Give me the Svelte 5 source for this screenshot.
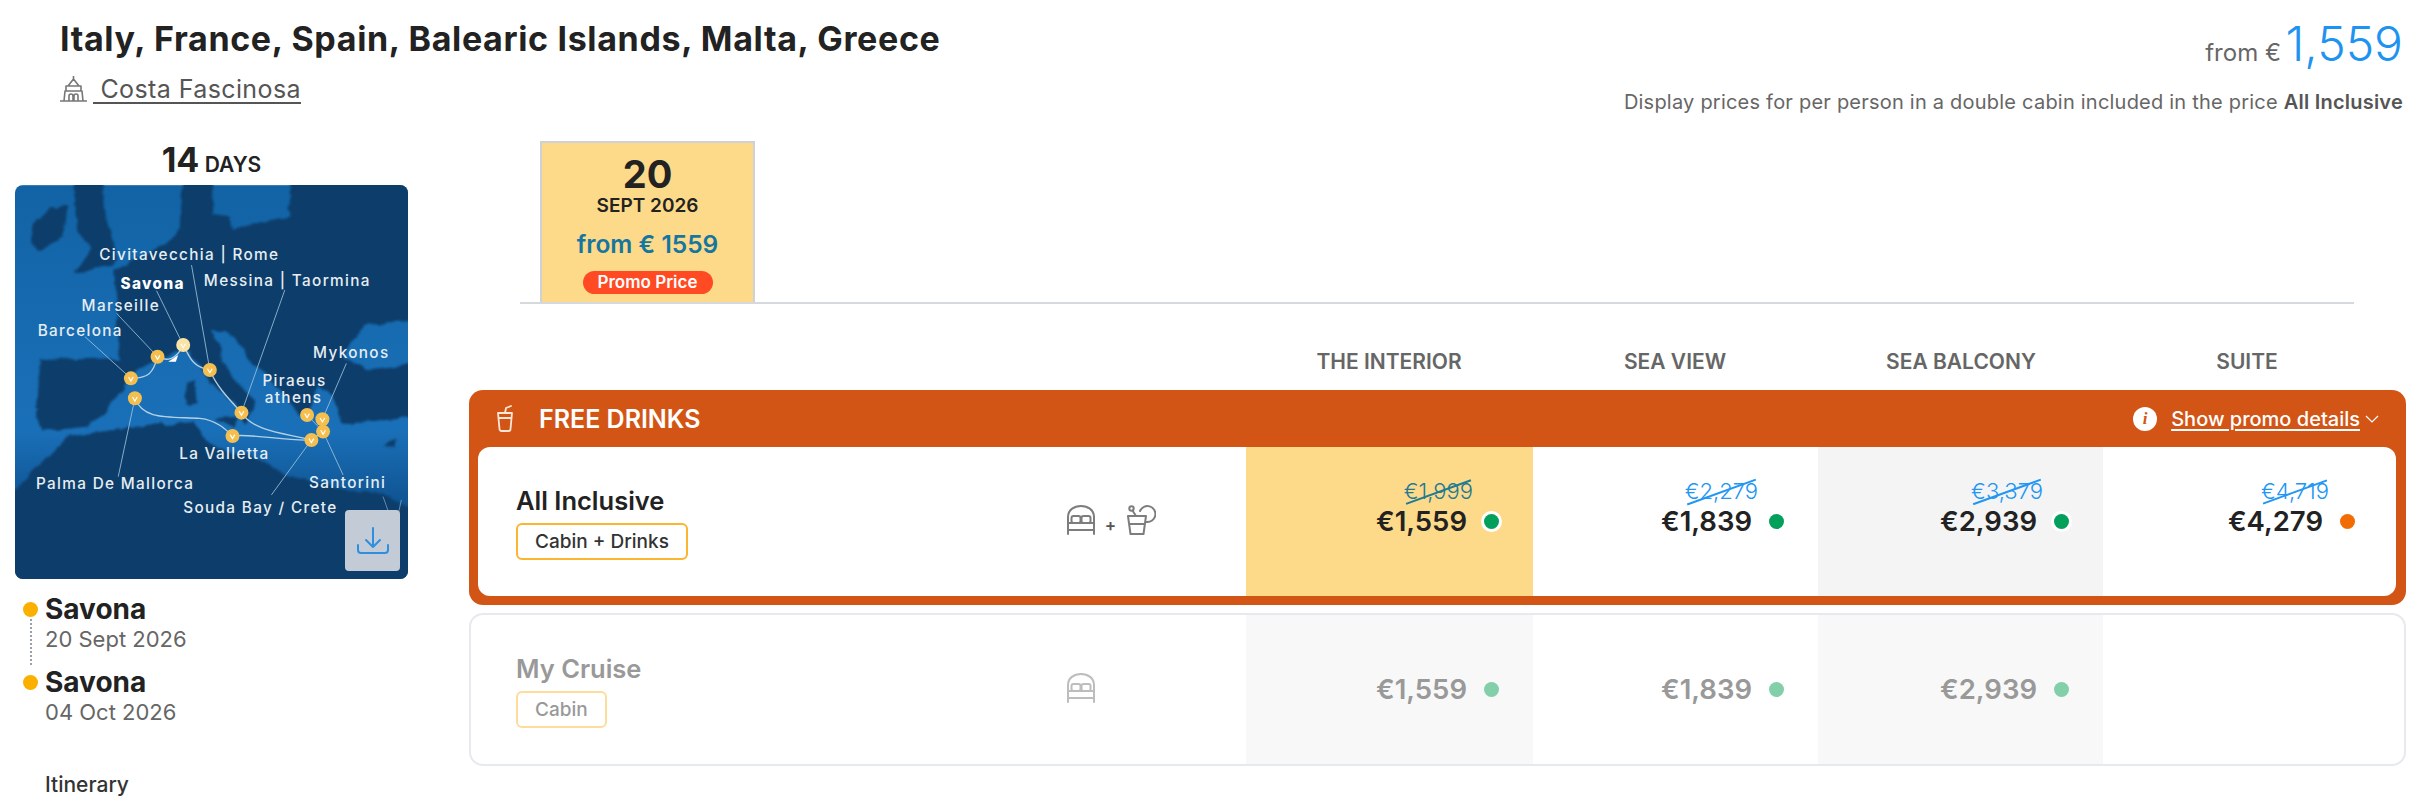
<script>
  const labels = [
    { text: 'Civitavecchia | Rome', x: 298, y: 270 },
    { text: 'Savona', x: 362, y: 357, bold: true },
    { text: 'Messina | Taormina', x: 612, y: 348 },
    { text: 'Marseille', x: 245, y: 423 },
    { text: 'Barcelona', x: 113, y: 497 },
    { text: 'Mykonos', x: 940, y: 565 },
    { text: 'Piraeus', x: 788, y: 648 },
    { text: 'athens', x: 795, y: 698 },
    { text: 'La Valletta', x: 538, y: 868 },
    { text: 'Palma De Mallorca', x: 108, y: 958 },
    { text: 'Santorini', x: 928, y: 955 },
    { text: 'Souda Bay / Crete', x: 550, y: 1028 }
  ];

  const leaders = [
    'M470 362L550 525', 'M575 285L630 600', 'M855 360L725 728', 'M350 430L473 560',
    'M255 500L393 625', 'M355 920L405 685', 'M1040 580L968 748', 'M1030 915L970 785',
    'M815 975L935 810', 'M922 735L970 785'
  ];

  const pins = [
    [550, 525], [473, 560], [393, 625], [405, 685], [630, 600], [725, 728],
    [922, 735], [968, 748], [970, 785], [935, 810], [698, 798]
  ];

  const allInclusive = [
    { old: '€1,999', price: '€1,559', dot: 'green', selected: true },
    { old: '€2,279', price: '€1,839', dot: 'green' },
    { old: '€3,379', price: '€2,939', dot: 'green', shaded: true, halo: true },
    { old: '€4,719', price: '€4,279', dot: 'orange', last: true }
  ];

  const myCruise = [
    { price: '€1,559', dot: 'green', shaded: true },
    { price: '€1,839', dot: 'green' },
    { price: '€2,939', dot: 'green', shaded: true },
    { last: true }
  ];
</script>

{#snippet bed()}
  <svg class="bed" viewBox="0 0 30 30" fill="none" stroke="currentColor" stroke-width="2" stroke-linecap="round" stroke-linejoin="round">
    <path d="M2 29V12C2 5 8 1 15 1s13 4 13 11v17" />
    <path d="M2 18h26M2 25h26" />
    <rect x="5.500" y="11" width="9" height="7" rx="2" />
    <rect x="15.500" y="11" width="9" height="7" rx="2" />
  </svg>
{/snippet}

{#snippet priceCells(cells)}
  {#each cells as c}
    <div class="cell" class:selected={c.selected} class:shaded={c.shaded} class:last={c.last}>
      {#if c.old}<span class="old">{c.old}</span>{/if}
      {#if c.price}
        <div class="price-line">
          <span class="price">{c.price}</span>
          <span class="dot {c.dot}" class:halo={c.selected || c.halo}></span>
        </div>
      {/if}
    </div>
  {/each}
{/snippet}

<div class="page">
  <header class="top">
    <div>
      <h1>Italy, France, Spain, Balearic Islands, Malta, Greece</h1>
      <div class="ship">
        <svg viewBox="0 0 27 26" fill="none" stroke="#777" stroke-width="1.600" stroke-linejoin="round">
          <path d="M13.500 0v3M8 10l5.500-7L19 10M6 15v-5h15v5" />
          <path d="M4 25l1-10h17l1 10" />
          <path d="M9 25v-5a2 2 0 0 1 4 0v5M14 25v-5a2 2 0 0 1 4 0v5M0 25h27" />
        </svg>
        <a href="#ship">&nbsp;Costa Fascinosa</a>
      </div>
    </div>
    <div class="from">
      <div class="from-line"><span class="from-label">from €</span> <span class="from-price">1,559</span></div>
      <p>Display prices for per person in a double cabin included in the price <b>All Inclusive</b></p>
    </div>
  </header>

  <div class="body">
    <aside class="side">
      <div class="days"><b>14</b> DAYS</div>
      <div class="map">
        <svg viewBox="45 45 1180 1182">
          <defs>
            <linearGradient id="sea" x1="0" y1="0" x2="0" y2="1">
              <stop offset="0" stop-color="#1263a5" />
              <stop offset="0.62" stop-color="#1a70b8" />
              <stop offset="0.82" stop-color="#0f5290" />
              <stop offset="1" stop-color="#0a3a66" />
            </linearGradient>
            <filter id="soft" x="-5%" y="-5%" width="110%" height="110%">
              <feTurbulence type="fractalNoise" baseFrequency="0.018" numOctaves="4" seed="7" result="noise" />
              <feDisplacementMap in="SourceGraphic" in2="noise" scale="26" xChannelSelector="R" yChannelSelector="G" />
              <feGaussianBlur stdDeviation="3" />
            </filter>
          </defs>
          <rect x="45" y="45" width="1180" height="1182" fill="url(#sea)" />
          <g fill="#0c3e6b" filter="url(#soft)">
            <path d="M95 160L150 115L200 110L190 200L120 240L90 210Z" />
            <path d="M220 40L300 10L315 130L345 240L340 290L225 305L275 230L235 180Z" />
            <path d="M340 300L420 260L500 220L540 170L545 0L640 0L640 130L690 140L700 180L760 160L870 140L870 0L1290 0L1290 450L1100 460L1030 560L1100 600L1290 565L1290 740L1030 760L1000 680L950 650L930 720L900 740L860 680L780 600L680 480L640 480L670 580L770 700L740 760L700 700L620 620L570 540L540 545L470 570L395 610L350 690L260 770L130 785L110 740L120 570L360 565Z" />
            <path d="M0 1010L100 900L210 800L400 770L580 760L640 830L760 860L850 910L1000 950L1145 975L1290 1040L1290 1290L0 1290Z" />
            <path d="M555 640L585 630L590 700L560 705Z" />
            <path d="M650 745L715 740L700 775Z" />
            <path d="M1150 825L1190 812L1180 835Z" />
          </g>
          <g fill="none" stroke="#9fc3dc" stroke-width="2.500">
            {#each leaders as d}<path {d} />{/each}
            <path d="M1150 980L1175 1050M1205 990L1190 1060" opacity="0.7" />
          </g>
          <g fill="none" stroke="#cfe2ef" stroke-width="4" opacity="0.85">
            <path d="M550 525C570 560 575 590 630 600C650 650 690 690 725 728C760 785 860 790 935 810" />
            <path d="M550 525C530 570 500 575 473 560C460 610 445 625 393 625" />
            <path d="M405 685C430 750 500 740 600 745C650 750 680 780 698 798C760 790 860 815 935 810L970 785" />
          </g>
          <path d="M505 575L535 555L528 575Z" fill="#fff" />
          {#each pins as p, i}
            <circle cx={p[0]} cy={p[1]} r="21" fill={i === 0 ? '#fbe3a6' : '#f4bf4f'} />
            <path d="M{p[0] - 7} {p[1] - 4}L{p[0]} {p[1] + 8}L{p[0] + 7} {p[1] - 4}" fill="none" stroke="#fff" stroke-width="3.500" />
          {/each}
          {#each labels as l}
            <text x={l.x} y={l.y} class="map-label" class:bold={l.bold}>{l.text}</text>
          {/each}
        </svg>
        <button class="download" aria-label="Download map">
          <svg viewBox="0 0 32 28" fill="none" stroke="#2f8fdf" stroke-width="2" stroke-linecap="round" stroke-linejoin="round">
            <path d="M16 1v19M9 13l7 7 7-7M1 18v5a3 3 0 0 0 3 3h24a3 3 0 0 0 3-3v-5" />
          </svg>
        </button>
      </div>

      <ul class="stops">
        <li><b>Savona</b><span>20 Sept 2026</span></li>
        <li><b>Savona</b><span>04 Oct 2026</span></li>
      </ul>
      <div class="itinerary">Itinerary</div>
    </aside>

    <main class="right">
      <div class="tabs">
        <div class="tab">
          <strong>20</strong>
          <span class="month">SEPT 2026</span>
          <span class="tab-from">from € 1559</span>
          <span class="promo">Promo Price</span>
        </div>
      </div>

      <div class="heads">
        <span>THE INTERIOR</span><span>SEA VIEW</span><span>SEA BALCONY</span><span>SUITE</span>
      </div>

      <section class="deal">
        <div class="deal-head">
          <div class="deal-title">
            <svg viewBox="0 0 18 27" fill="none" stroke="#fbe6d8" stroke-width="1.800" stroke-linecap="round" stroke-linejoin="round">
              <path d="M2 8h14l-1.500 16a2 2 0 0 1-2 2h-7a2 2 0 0 1-2-2ZM3 13h12M9 8l1-5 5-2" />
            </svg>
            <span>FREE DRINKS</span>
          </div>
          <div class="deal-link">
            <span class="info">i</span>
            <a href="#promo">Show promo details</a>
            <svg viewBox="0 0 14 8" fill="none" stroke="#fff" stroke-width="1.200"><path d="M1 1l6 6 6-6" /></svg>
          </div>
        </div>
        <div class="row active">
          <div class="label">
            <div class="name">
              <h3>All Inclusive</h3>
              <span class="tag">Cabin + Drinks</span>
            </div>
            <div class="icons">
              {@render bed()}
              <span class="plus">+</span>
              <svg class="drink" viewBox="0 0 31 30" fill="none" stroke="currentColor" stroke-width="2" stroke-linecap="round" stroke-linejoin="round">
                <path d="M3 11h18l-2.500 18h-13ZM4.500 19h15" />
                <path d="M11 11L7.500 5.500" />
                <circle cx="6.500" cy="3.500" r="2.200" />
                <path d="M15 6a8 8 0 1 1 6.500 11" />
              </svg>
            </div>
          </div>
          {@render priceCells(allInclusive)}
        </div>
      </section>

      <section class="row plain">
        <div class="label">
          <div class="name">
            <h3>My Cruise</h3>
            <span class="tag">Cabin</span>
          </div>
          <div class="icons">{@render bed()}</div>
        </div>
        {@render priceCells(myCruise)}
      </section>
    </main>
  </div>
</div>

<style>
  :global(body) {
    margin: 0;
    background: #fff;
  }

  .page {
    font-family: Inter, "Open Sans", sans-serif;
    color: #222;
    height: 800px;
    overflow: hidden;
  }

  .top {
    display: flex;
    justify-content: space-between;
    padding: 19px 14px 0 60px;
    height: 142px;
    box-sizing: border-box;
  }

  h1 {
    margin: 0;
    font-size: 34px;
    line-height: 40px;
    font-weight: 700;
    letter-spacing: 0.65px;
  }

  .ship {
    display: flex;
    align-items: center;
    margin-top: 16px;
    height: 28px;
  }

  .ship svg {
    width: 27px;
    height: 26px;
    margin-right: 6px;
  }

  .ship a {
    color: #555;
    font-size: 25px;
    letter-spacing: 0.4px;
    text-decoration: underline;
    text-underline-offset: 4px;
  }

  .from {
    text-align: right;
  }

  .from-line {
    margin-top: -4px;
    line-height: 58px;
  }

  .from-label {
    font-size: 24px;
    color: #666;
  }

  .from-price {
    font-size: 48px;
    font-weight: 300;
    color: #1f93f0;
  }

  .from p {
    margin: 6px 0 0;
    font-size: 20px;
    letter-spacing: 0.22px;
    line-height: 24px;
    color: #666;
  }

  .from p b {
    color: #555;
    font-weight: 600;
  }

  .body {
    display: flex;
    padding-left: 15px;
    margin-top: -1px;
  }

  .side {
    width: 393px;
    flex: none;
  }

  .days {
    height: 44px;
    text-align: center;
    font-size: 21px;
    font-weight: 600;
    line-height: 38px;
    color: #222;
  }

  .days b {
    font-size: 34px;
    line-height: 38px;
    font-weight: 700;
  }

  .map {
    position: relative;
    width: 393px;
    height: 394px;
    border-radius: 8px;
    overflow: hidden;
  }

  .map > svg {
    display: block;
    width: 100%;
    height: 100%;
  }

  .map-label {
    fill: #e6edf3;
    font-size: 46px;
    letter-spacing: 4px;
    font-weight: 500;
  }

  .map-label.bold {
    fill: #fff;
    font-weight: 800;
  }

  .download {
    position: absolute;
    right: 8px;
    bottom: 8px;
    width: 55px;
    height: 61px;
    padding: 0;
    border: 0;
    border-radius: 4px;
    background: #c3ccd6;
    display: flex;
    align-items: center;
    justify-content: center;
  }

  .download svg {
    width: 32px;
    height: 28px;
  }

  .stops {
    list-style: none;
    margin: 13px 0 0;
    padding: 0 0 0 30px;
  }

  .stops li {
    position: relative;
    display: flex;
    flex-direction: column;
    height: 73px;
  }

  .stops li::before {
    content: '';
    position: absolute;
    left: -22px;
    top: 10px;
    width: 15px;
    height: 15px;
    border-radius: 50%;
    background: #fbb000;
  }

  .stops li:first-child::after {
    content: '';
    position: absolute;
    left: -15px;
    top: 27px;
    height: 46px;
    border-left: 2px dotted #9aa0a8;
  }

  .stops b {
    font-size: 28px;
    line-height: 34px;
    font-weight: 700;
  }

  .stops span {
    font-size: 22px;
    line-height: 26px;
    color: #666;
  }

  .itinerary {
    margin: 34px 0 0 30px;
    font-size: 21px;
    line-height: 26px;
    font-weight: 500;
    color: #333;
  }

  .right {
    width: 1937px;
    margin-left: 61px;
    flex: none;
  }

  .tabs {
    margin: 0 52px 0 51px;
    padding-left: 20px;
    border-bottom: 2px solid #d5d8dc;
    display: flex;
    height: 161px;
  }

  .tab {
    width: 215px;
    box-sizing: border-box;
    background: #fdd98a;
    border: 2px solid #cfd2d4;
    border-bottom: 0;
    display: flex;
    flex-direction: column;
    align-items: center;
    padding-top: 10px;
  }

  .tab strong {
    font-size: 38px;
    line-height: 42px;
    font-weight: 700;
  }

  .month {
    font-size: 19px;
    line-height: 22px;
    font-weight: 600;
  }

  .tab-from {
    margin-top: 12px;
    font-size: 24.500px;
    line-height: 30px;
    font-weight: 600;
    color: #15779f;
  }

  .promo {
    margin-top: 12px;
    width: 130px;
    height: 23px;
    border-radius: 12px;
    background: #ff4a24;
    color: #fff;
    font-size: 17px;
    line-height: 23px;
    font-weight: 600;
    text-align: center;
  }

  .heads {
    display: grid;
    grid-template-columns: repeat(4, 286px);
    padding-left: 777px;
    margin-top: 46px;
    height: 40px;
    text-align: center;
    font-size: 21px;
    line-height: 24px;
    font-weight: 600;
    color: #666;
  }

  .deal {
    height: 215px;
    box-sizing: border-box;
    border-radius: 14px;
    background: #d25516;
    padding: 0 10px 9px 9px;
  }

  .deal-head {
    height: 57px;
    display: flex;
    align-items: center;
    justify-content: space-between;
    color: #fff;
    padding: 0 17px 0 18px;
  }

  .deal-title {
    display: flex;
    align-items: center;
    gap: 25px;
    font-size: 25px;
    font-weight: 600;
  }

  .deal-title svg {
    width: 18px;
    height: 27px;
  }

  .deal-link {
    display: flex;
    align-items: center;
    gap: 5px;
  }

  .deal-link a {
    color: #fff;
    font-size: 20px;
    font-weight: 500;
    text-underline-offset: 3px;
    margin-left: 9px;
  }

  .deal-link svg {
    width: 14px;
    height: 8px;
  }

  .info {
    width: 24px;
    height: 24px;
    border-radius: 50%;
    background: #fff;
    color: #d25516;
    font: italic 700 17px/24px "Liberation Serif", serif;
    text-align: center;
  }

  .row {
    display: grid;
    grid-template-columns: 768px 287px 285px 285px 1fr;
  }

  .row.active {
    height: 149px;
    background: #fff;
    border-radius: 12px;
    overflow: hidden;
  }

  .row.plain {
    margin-top: 8px;
    height: 153px;
    box-sizing: border-box;
    border: 2px solid #e6e9ee;
    border-radius: 14px;
    grid-template-columns: 775px 287px 285px 285px 1fr;
    overflow: hidden;
  }

  .label {
    display: flex;
    align-items: center;
    padding-left: 38px;
  }

  .plain .label {
    padding-left: 45px;
  }

  .name {
    width: 550px;
    flex: none;
    display: flex;
    flex-direction: column;
    align-items: flex-start;
  }

  .name h3 {
    margin: 0 0 4px;
    font-size: 25.500px;
    line-height: 36px;
    font-weight: 600;
  }

  .plain h3 {
    color: #999;
  }

  .tag {
    box-sizing: border-box;
    height: 37px;
    padding: 0 17px;
    border: 2px solid #fbb52e;
    border-radius: 6px;
    font-size: 19px;
    line-height: 33px;
    font-weight: 500;
    color: #333;
  }

  .plain .tag {
    border-color: #fddc9c;
    color: #999;
  }

  .icons {
    display: flex;
    align-items: flex-end;
    margin-bottom: 3px;
    color: #7d7d7d;
  }

  .plain .icons {
    color: #bdbdbd;
  }

  .bed,
  .drink {
    width: 30px;
    height: 30px;
    display: block;
  }

  .drink {
    width: 31px;
  }

  .plus {
    width: 29px;
    text-align: center;
    font-size: 17px;
    line-height: 20px;
    font-weight: 600;
    color: #555;
  }

  .cell {
    display: flex;
    flex-direction: column;
    justify-content: center;
    align-items: flex-end;
    padding-right: 34px;
  }

  .active .cell {
    padding-bottom: 30px;
  }

  .cell.last {
    padding-right: 41px;
  }

  .cell.selected {
    background: #fdd98a;
  }

  .cell.shaded {
    background: #f4f4f4;
  }

  .plain .cell.shaded {
    background: #f8f8f8;
  }

  .old {
    position: relative;
    margin-right: 26px;
    font-size: 22px;
    line-height: 30px;
    font-weight: 300;
    color: #2196f3;
  }

  .old::after {
    content: '';
    position: absolute;
    left: 0;
    right: 0;
    top: 15px;
    border-top: 2px solid currentColor;
    transform: rotate(-20deg);
  }

  .selected .old {
    color: #1f7a93;
  }

  .price-line {
    display: flex;
    align-items: center;
    gap: 17px;
  }

  .price {
    font-size: 27.500px;
    line-height: 31px;
    font-weight: 600;
    color: #222;
  }

  .plain .price {
    color: #999;
  }

  .dot {
    width: 15px;
    height: 15px;
    border-radius: 50%;
  }

  .dot.green {
    background: #03a05c;
  }

  .dot.orange {
    background: #f26c05;
  }

  .dot.halo {
    box-shadow: 0 0 0 3px #fff;
  }

  .plain .dot.green {
    background: #82cfaa;
  }
</style>
